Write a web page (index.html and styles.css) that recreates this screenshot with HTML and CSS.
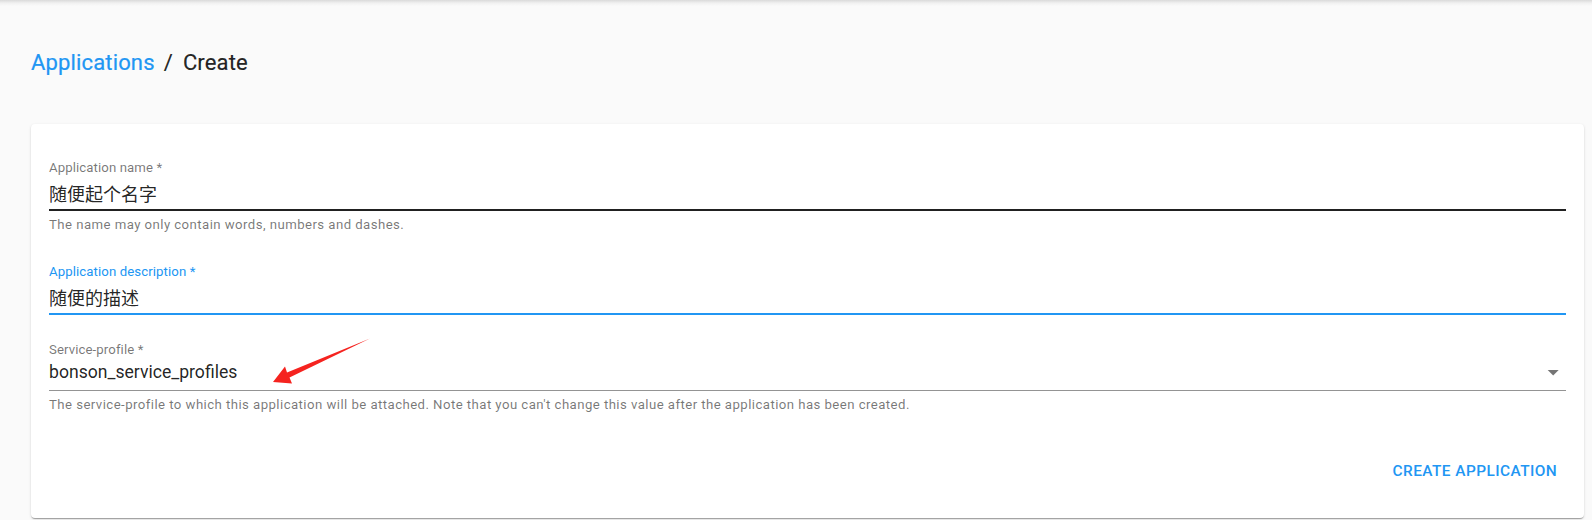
FILE: index.html
```html
<!DOCTYPE html>
<html lang="zh-CN">
<head>
<meta charset="utf-8">
<title>Applications / Create</title>
<link rel="stylesheet" href="styles.css">
</head>
<body>
<div class="app">
  <div class="topshade"></div>
  <main class="page">
    <nav class="breadcrumb">
      <a class="crumb-link" href="#">Applications</a>
      <span class="crumb-sep">/</span>
      <span class="crumb-current">Create</span>
    </nav>
    <section class="card">
      <form class="form">
        <div class="field">
          <label class="field-label">Application name *</label>
          <div class="field-input field-input--hover field-input--cjk">随便起个名字</div>
          <p class="field-helper">The name may only contain words, numbers and dashes.</p>
        </div>
        <div class="field">
          <label class="field-label field-label--focused">Application description *</label>
          <div class="field-input field-input--focused field-input--cjk">随便的描述</div>
        </div>
        <div class="field">
          <label class="field-label">Service-profile *</label>
          <div class="field-input field-input--select">
            <span class="select-value">bonson_service_profiles</span>
            <svg class="select-icon" viewBox="0 0 24 24" aria-hidden="true"><path d="M7 10l5 5 5-5z"/></svg>
          </div>
          <p class="field-helper">The service-profile to which this application will be attached. Note that you can't change this value after the application has been created.</p>
        </div>
      </form>
      <div class="actions">
        <button class="text-button" type="button">Create application</button>
      </div>
    </section>
  </main>
  <svg class="annotation" width="1592" height="520" viewBox="0 0 1592 520" aria-hidden="true">
    <polygon points="273,382 285,366.5 287,372.5 370,338.5 289.5,377.5 292,383.5" fill="#f5231f"/>
  </svg>
</div>
</body>
</html>
```

FILE: styles.css
```css
* { box-sizing: border-box; }

html, body {
  margin: 0;
  padding: 0;
  background: #fafafa;
}

body {
  font-family: Roboto, "Noto Sans CJK SC", "Liberation Sans", sans-serif;
  color: rgba(0, 0, 0, 0.87);
}

.app {
  position: relative;
  width: 1592px;
  height: 520px;
  overflow: hidden;
}

.topshade {
  height: 6px;
  background: linear-gradient(to bottom, rgba(0, 0, 0, 0.13), rgba(0, 0, 0, 0.04) 50%, rgba(0, 0, 0, 0));
}

.page {
  padding: 0 8px 0 31px;
}

.breadcrumb {
  margin-top: 44px;
  height: 26px;
  display: flex;
  align-items: baseline;
  font-size: 22px;
  line-height: 26px;
  font-weight: 400;
  letter-spacing: 0.15px;
  -webkit-text-stroke: 0.2px currentColor;
}

.crumb-link {
  color: #2196f3;
  text-decoration: none;
}

.crumb-sep {
  margin: 0 10px 0 9px;
  color: rgba(0, 0, 0, 0.87);
}

.crumb-current {
  color: rgba(0, 0, 0, 0.87);
}

.card {
  margin-top: 48px;
  background: #fff;
  border-radius: 4px;
  box-shadow: 0 2px 1px -1px rgba(0, 0, 0, 0.2), 0 1px 1px 0 rgba(0, 0, 0, 0.14), 0 1px 3px 0 rgba(0, 0, 0, 0.12);
  padding: 36px 18px 28px;
}

.form {
  display: flex;
  flex-direction: column;
  gap: 27px;
}

.field {
  display: flex;
  flex-direction: column;
}

.field-label {
  display: block;
  font-size: 13.2px;
  line-height: 16px;
  height: 16px;
  color: rgba(0, 0, 0, 0.54);
  letter-spacing: 0.1px;
}

.field-label--focused {
  color: #2196f3;
}

.field-input {
  font-size: 17.6px;
  line-height: 21px;
  padding: 4px 0 7px;
  border-bottom: 1px solid rgba(0, 0, 0, 0.42);
  color: rgba(0, 0, 0, 0.87);
}

.field-input--cjk {
  font-size: 18px;
}

.field-input--hover {
  padding: 8px 0 4px;
  border-bottom: 2px solid rgba(0, 0, 0, 0.87);
}

.field-input--focused {
  padding: 8px 0 4px;
  border-bottom: 2px solid #2196f3;
}

.field-input--select {
  display: flex;
  align-items: center;
  justify-content: space-between;
}

.select-icon {
  width: 26.4px;
  height: 26.4px;
  margin: -3px 0 -3px 0;
  fill: rgba(0, 0, 0, 0.54);
  flex: none;
}

.field-helper {
  margin: 4px 0 0;
  padding-bottom: 2px;
  font-size: 13.2px;
  line-height: 20px;
  color: rgba(0, 0, 0, 0.54);
  letter-spacing: 0.44px;
}

.actions {
  margin-top: 34px;
  display: flex;
  justify-content: flex-end;
}

.text-button {
  border: 0;
  background: transparent;
  padding: 6.6px 8.8px;
  font-family: Roboto, "Liberation Sans", sans-serif;
  font-size: 15.4px;
  line-height: 26px;
  font-weight: 500;
  letter-spacing: 0.44px;
  text-transform: uppercase;
  color: #2196f3;
  border-radius: 4px;
  cursor: pointer;
}

.annotation {
  position: absolute;
  left: 0;
  top: 0;
  pointer-events: none;
}
```
